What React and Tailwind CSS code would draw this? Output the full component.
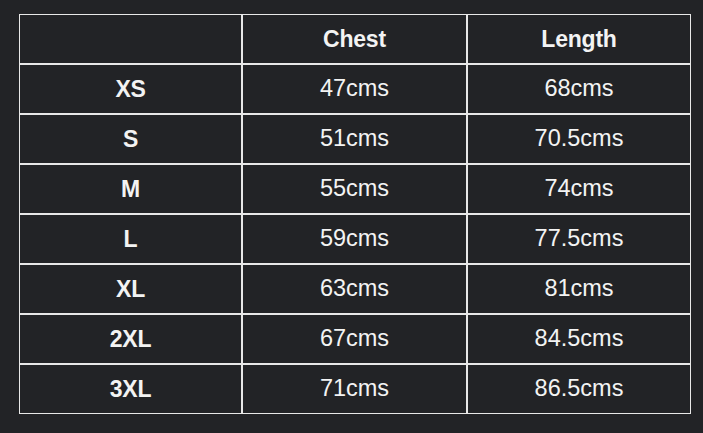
export default function App() {
  const rows = [
    ["XS", "47cms", "68cms"],
    ["S", "51cms", "70.5cms"],
    ["M", "55cms", "74cms"],
    ["L", "59cms", "77.5cms"],
    ["XL", "63cms", "81cms"],
    ["2XL", "67cms", "84.5cms"],
    ["3XL", "71cms", "86.5cms"],
  ];
  const cell = "border border-[#e8e8e8] p-0 text-center align-middle";
  const bold = " font-bold text-[23px] tracking-[-0.01em]";
  return (
    <div className="w-[703px] h-[433px] bg-[#222326] pt-[14px] pl-[19px] text-[#f3f3f3] text-[23.5px] [font-family:'Liberation_Sans',Arial,sans-serif]">
      <table className="w-[672px] table-fixed border-separate border-spacing-0">
        <colgroup>
          <col className="w-[223px]" />
          <col className="w-[225px]" />
          <col className="w-[224px]" />
        </colgroup>
        <thead>
          <tr className="h-[50px]">
            <th className={cell}></th>
            <th className={cell + bold}>Chest</th>
            <th className={cell + bold}>Length</th>
          </tr>
        </thead>
        <tbody>
          {rows.map((r) => (
            <tr key={r[0]} className="h-[50px]">
              <td className={cell + bold}>{r[0]}</td>
              <td className={cell}>{r[1]}</td>
              <td className={cell}>{r[2]}</td>
            </tr>
          ))}
        </tbody>
      </table>
    </div>
  );
}
